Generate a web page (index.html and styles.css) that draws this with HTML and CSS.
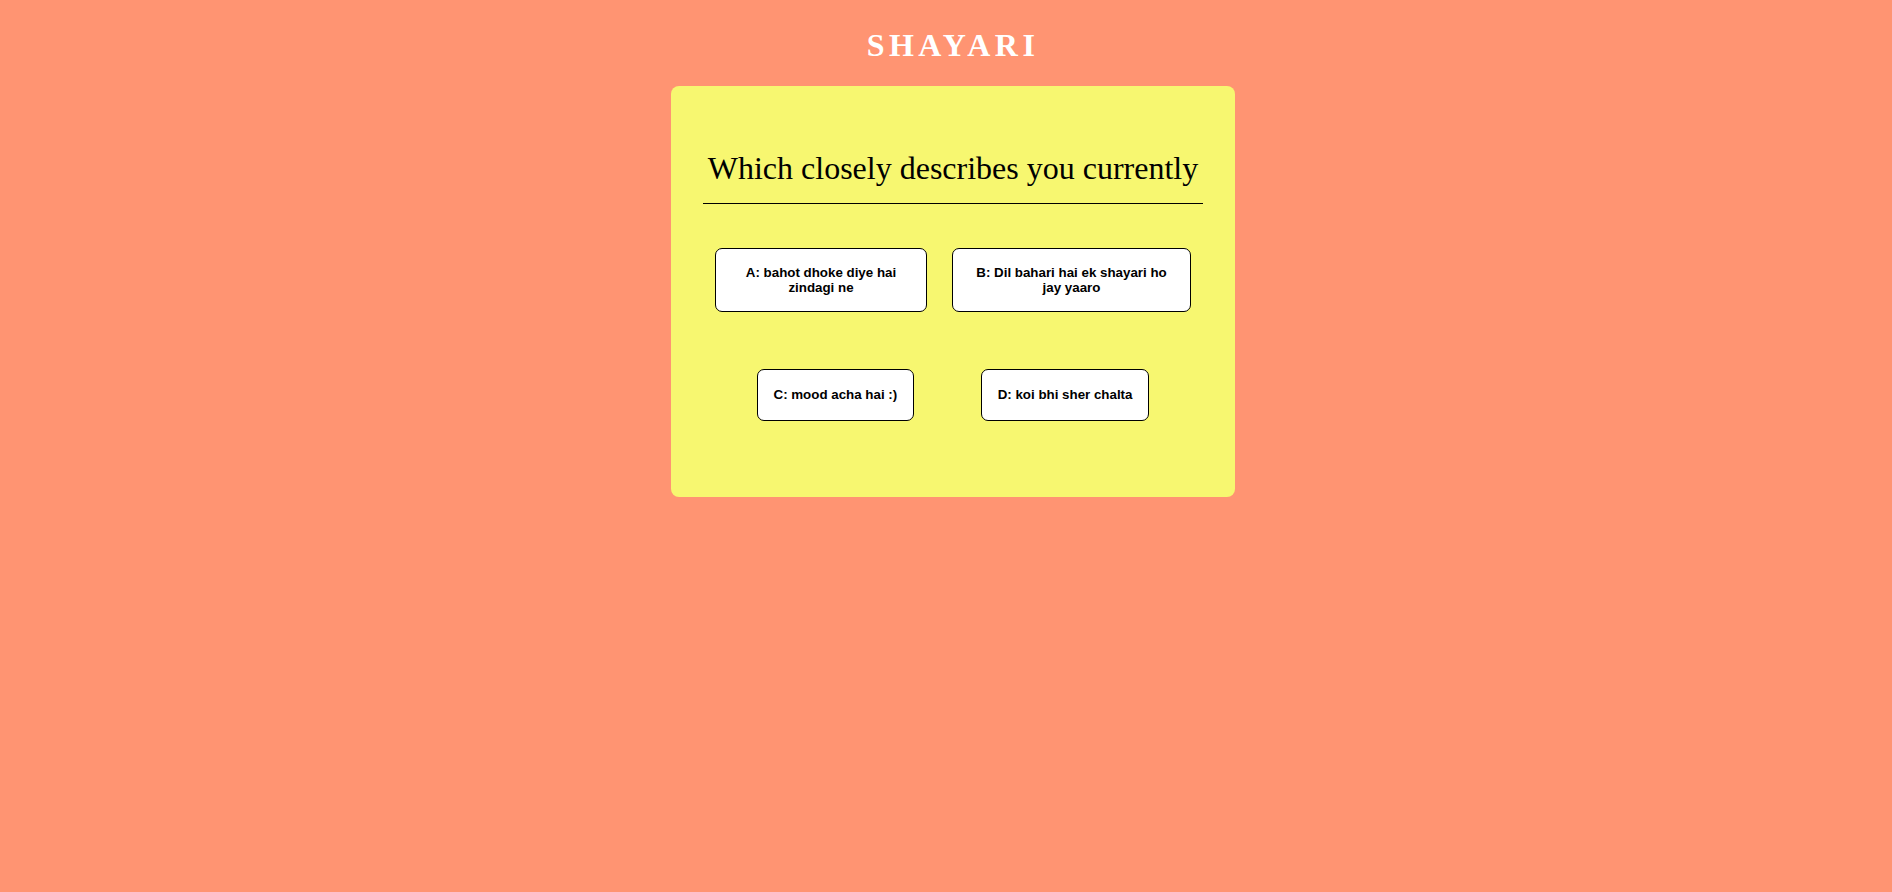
FILE: index.html
```html
<!DOCTYPE html>
<html lang="en">
<head>
<meta charset="utf-8">
<title>Shayari</title>
<link rel="stylesheet" href="styles.css">
</head>
<body>
<div class="page">
  <h1 class="title">SHAYARI</h1>
  <main class="card">
    <h2 class="question">Which closely describes you currently</h2>
    <div class="options options-top">
      <button class="option">A: bahot dhoke diye hai zindagi ne</button>
      <button class="option">B: Dil bahari hai ek shayari ho jay yaaro</button>
    </div>
    <div class="options options-bottom">
      <button class="option option-short">C: mood acha hai :)</button>
      <button class="option option-short">D: koi bhi sher chalta</button>
    </div>
  </main>
</div>
</body>
</html>
```

FILE: styles.css
```css
html, body {
  margin: 0;
  padding: 0;
}

body {
  background: #ff9472;
  font-family: "Liberation Serif", "Times New Roman", serif;
  min-height: 892px;
}

.page {
  padding-left: 14px;
}

.title {
  margin: 27px 0 23px;
  font-size: 32px;
  line-height: 36px;
  font-weight: bold;
  letter-spacing: 4.4px;
  color: #ffffff;
  text-align: center;
}

.card {
  box-sizing: border-box;
  width: 564px;
  margin: 0 auto;
  padding: 64px 19px 76px;
  background: #f7f770;
  border-radius: 8px;
}

.question {
  margin: 0 13px;
  padding-bottom: 17px;
  border-bottom: 1px solid #000000;
  font-size: 32px;
  line-height: 36px;
  font-weight: normal;
  color: #000000;
  text-align: center;
}

.options {
  display: grid;
  justify-content: space-evenly;
  align-items: start;
}

.options-top {
  grid-template-columns: 212px 239px;
  margin-top: 44px;
}

.options-bottom {
  grid-template-columns: auto auto;
  margin-top: 57px;
}

.option {
  box-sizing: border-box;
  padding: 16px;
  background: #ffffff;
  border: 1px solid #000000;
  border-radius: 7px;
  font-family: "Liberation Sans", Arial, sans-serif;
  font-size: 13.333px;
  font-weight: bold;
  color: #000000;
  text-align: center;
}

.option-short {
  padding: 17px 16px 18px;
}
```
